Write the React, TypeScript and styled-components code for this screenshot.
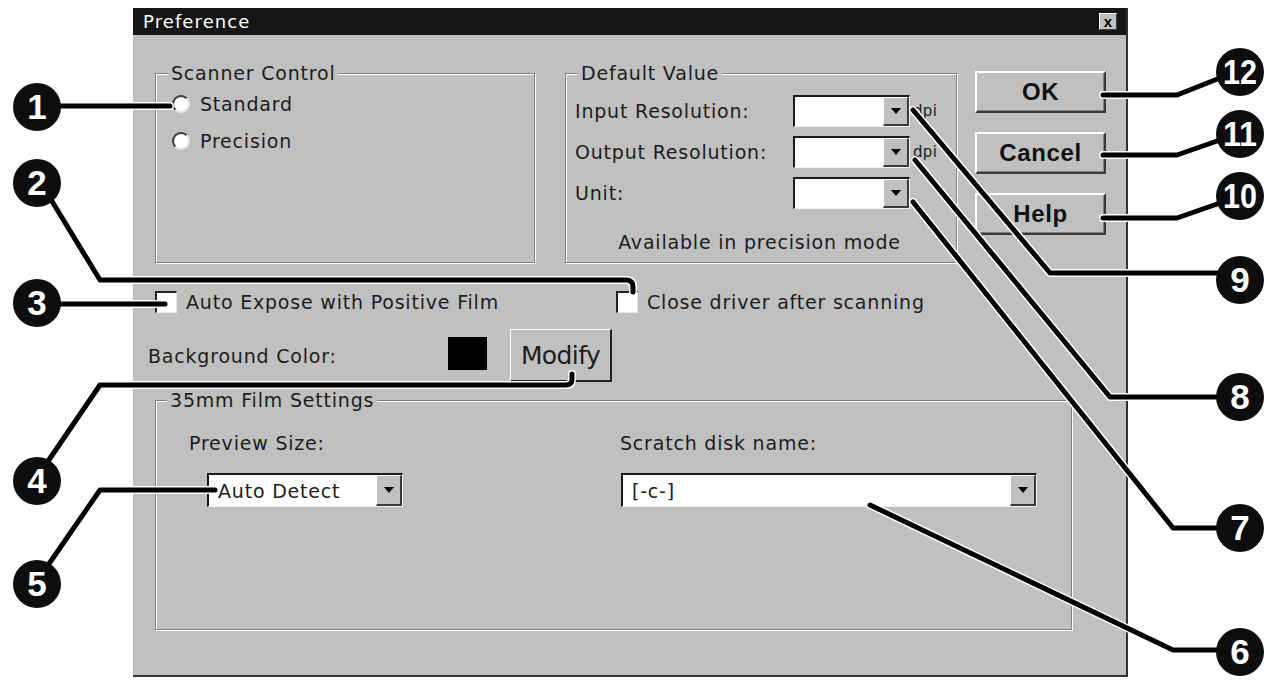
import styled, { createGlobalStyle } from 'styled-components';

const UI_FONT = `"DejaVu Sans", "Liberation Sans", sans-serif`;
const BOLD_FONT = `"Liberation Sans", Arial, sans-serif`;

const GlobalStyle = createGlobalStyle`
  html, body {
    margin: 0;
    padding: 0;
    background: #fff;
  }
  body {
    font-family: ${UI_FONT};
  }
`;

const Page = styled.div`
  position: relative;
  width: 1276px;
  height: 687px;
  box-sizing: border-box;
  padding: 8px 0 0 133px;
  overflow: hidden;
  background: #fff;
`;

const Dialog = styled.div`
  width: 995px;
  height: 669px;
  box-sizing: border-box;
  display: flex;
  flex-direction: column;
  background: #c0c0c0;
  border-right: 2px solid #333;
  border-bottom: 2px solid #333;
  font-family: ${UI_FONT};
  font-size: 19px;
  letter-spacing: 0.8px;
  color: #1c1c1c;
`;

const TitleBar = styled.div`
  flex: none;
  height: 27px;
  display: flex;
  align-items: center;
  justify-content: space-between;
  padding: 0 9px 0 10px;
  background: #161616;
  color: #fff;
`;

const Title = styled.span`
  font-size: 18px;
  letter-spacing: 1.1px;
`;

const CloseBox = styled.span`
  width: 18px;
  height: 17px;
  box-sizing: border-box;
  display: flex;
  align-items: center;
  justify-content: center;
  background: #c0c0c0;
  border-top: 1px solid #fff;
  border-left: 1px solid #fff;
  border-right: 1px solid #404040;
  border-bottom: 1px solid #404040;
  color: #000;
  font-family: ${BOLD_FONT};
  font-weight: bold;
  font-size: 15px;
  letter-spacing: 0;
  line-height: 1;
`;

const Body = styled.div`
  flex: 1;
  display: flex;
  flex-direction: column;
  padding: 27px 0 0 22px;
`;

const TopRow = styled.div`
  display: flex;
  align-items: flex-start;
`;

const Group = styled.fieldset<{ $w: number; $h: number; $pad: string; $ml?: number }>`
  margin: 0 0 0 ${p => p.$ml ?? 0}px;
  padding: ${p => p.$pad};
  width: ${p => p.$w}px;
  height: ${p => p.$h}px;
  min-width: 0;
  box-sizing: border-box;
  border: 1px solid #808080;
  box-shadow: 1px 1px 0 #fff, inset 1px 1px 0 #fff;
`;

// legend offset is measured from the group's content edge
const Legend = styled.legend<{ $x: number }>`
  margin-left: ${p => p.$x}px;
  padding: 0 3px;
  line-height: 22px;
  background: #c0c0c0;
`;

const OptionList = styled.div`
  display: flex;
  flex-direction: column;
  gap: 13px;
`;

const Option = styled.label`
  height: 24px;
  display: flex;
  align-items: center;
  gap: 10px;
`;

const Radio = styled.span`
  width: 18px;
  height: 18px;
  box-sizing: border-box;
  border-radius: 50%;
  background: #fff;
  border: 2px solid;
  border-color: #3a3a3a #e8e8e8 #e8e8e8 #3a3a3a;
`;

const FieldList = styled.div`
  display: flex;
  flex-direction: column;
  gap: 9px;
`;

const FieldRow = styled.div`
  height: 32px;
  display: flex;
  align-items: center;
`;

const FieldLabel = styled.span<{ $w: number }>`
  width: ${p => p.$w}px;
  flex: none;
  white-space: nowrap;
`;

const Unit = styled.span`
  margin-left: 3px;
  font-size: 15px;
  letter-spacing: 0.3px;
  color: #1c1c1c;
`;

const Hint = styled.div`
  margin-top: 22px;
  padding-right: 12px;
  line-height: 22px;
  text-align: center;
`;

const Combo = styled.div<{ $w: number; $h: number; $ml?: number }>`
  width: ${p => p.$w}px;
  height: ${p => p.$h}px;
  margin-left: ${p => p.$ml ?? 0}px;
  box-sizing: border-box;
  display: flex;
  align-items: center;
  justify-content: space-between;
  padding-left: 9px;
  background: #fff;
  border-top: 2px solid #1a1a1a;
  border-left: 2px solid #1a1a1a;
  border-right: 1px solid #f2f2f2;
  border-bottom: 1px solid #f2f2f2;
  white-space: nowrap;
`;

const DropButton = styled.span`
  align-self: stretch;
  width: 26px;
  flex: none;
  box-sizing: border-box;
  display: flex;
  align-items: center;
  justify-content: center;
  background: #c0c0c0;
  border-top: 1px solid #fff;
  border-left: 1px solid #fff;
  border-right: 2px solid #3a3a3a;
  border-bottom: 2px solid #3a3a3a;

  &::after {
    content: '';
    border-left: 5px solid transparent;
    border-right: 5px solid transparent;
    border-top: 6px solid #000;
  }
`;

const ButtonColumn = styled.div`
  margin: 9px 0 0 18px;
  display: flex;
  flex-direction: column;
  gap: 19px;
`;

const PushButton = styled.button`
  width: 131px;
  height: 42px;
  padding: 0;
  box-sizing: border-box;
  background: #c0c0c0;
  border-style: solid;
  border-width: 2px;
  border-color: #fff #3a3a3a #3a3a3a #fff;
  box-shadow: inset -1px -1px 0 #808080;
  font-family: ${BOLD_FONT};
  font-weight: bold;
  font-size: 24px;
  letter-spacing: 0.6px;
  color: #111;
`;

const CheckRow = styled.div`
  margin-top: 27px;
  height: 24px;
  display: flex;
  align-items: center;
`;

const CheckItem = styled.label<{ $w?: number }>`
  ${p => (p.$w ? `width: ${p.$w}px;` : '')}
  flex: none;
  display: flex;
  align-items: center;
  gap: 9px;
  white-space: nowrap;
`;

const CheckBox = styled.span`
  width: 22px;
  height: 22px;
  box-sizing: border-box;
  background: #fff;
  border-style: solid;
  border-width: 2px 1px 1px 2px;
  border-color: #222 #e8e8e8 #e8e8e8 #222;
`;

const ColorRow = styled.div`
  margin: 15px 0 0 -7px;
  height: 53px;
  display: flex;
  align-items: center;
`;

const Swatch = styled.span<{ $color: string }>`
  width: 39px;
  height: 33px;
  margin: -5px 23px 0 0;
  background: ${p => p.$color};
`;

const ModifyButton = styled.button`
  width: 102px;
  height: 53px;
  padding: 0;
  box-sizing: border-box;
  background: #c0c0c0;
  border-style: solid;
  border-width: 1px 2px 2px 1px;
  border-color: #fff #202020 #202020 #fff;
  font-family: ${UI_FONT};
  font-size: 25px;
  letter-spacing: -0.6px;
  color: #1c1c1c;
`;

const FilmRow = styled.div`
  margin-top: 7px;
`;

const FilmColumns = styled.div`
  display: flex;
`;

const FilmColumn = styled.div<{ $w?: number }>`
  ${p => (p.$w ? `width: ${p.$w}px;` : '')}
  flex: none;
  display: flex;
  flex-direction: column;
  gap: 19px;
`;

const ColumnLabel = styled.span`
  line-height: 22px;
`;

const Overlay = styled.svg`
  position: absolute;
  left: 0;
  top: 0;
  pointer-events: none;
`;

const LEADERS = [
  'M60 106 H170',
  'M50 198 L100 280 H626 Q633 280 633 287 V292',
  'M60 304 H165',
  'M42 470 L100 385 H566 Q572 385 572 379 V374',
  'M44 571 L100 490 H215',
  'M870 505 L1173 650 H1220',
  'M913 202 L1173 528 H1220',
  'M915 160 L1110 397 H1220',
  'M913 110 L1050 273 H1220',
  'M1103 218 H1177 L1220 203',
  'M1103 155 H1177 L1220 140',
  'M1103 95 H1177 L1220 78',
];

const BADGES = [
  { n: '1', x: 37, y: 107 },
  { n: '2', x: 37, y: 183 },
  { n: '3', x: 37, y: 303 },
  { n: '4', x: 37, y: 481 },
  { n: '5', x: 37, y: 584 },
  { n: '6', x: 1240, y: 652 },
  { n: '7', x: 1240, y: 528 },
  { n: '8', x: 1240, y: 397 },
  { n: '9', x: 1240, y: 280 },
  { n: '10', x: 1240, y: 196 },
  { n: '11', x: 1240, y: 134 },
  { n: '12', x: 1240, y: 72 },
];

function Callouts() {
  return (
    <Overlay width={1276} height={687} viewBox="0 0 1276 687">
      <g fill="none" strokeLinejoin="round" strokeLinecap="round">
        {LEADERS.map(d => (
          <path key={'h' + d} d={d} stroke="#fff" strokeWidth={8} />
        ))}
        {LEADERS.map(d => (
          <path key={d} d={d} stroke="#000" strokeWidth={5} />
        ))}
      </g>
      {BADGES.map(b => (
        <g key={b.n}>
          <circle cx={b.x} cy={b.y} r={24} fill="#0d0d0d" />
          <text
            x={b.x}
            y={b.y + 12}
            textAnchor="middle"
            fill="#fff"
            fontFamily={BOLD_FONT}
            fontWeight="bold"
            fontSize={35}
            {...(b.n.length > 1 ? { textLength: 34, lengthAdjust: 'spacingAndGlyphs' } : {})}
          >
            {b.n}
          </text>
        </g>
      ))}
    </Overlay>
  );
}

function Select({ w, h, ml, value }: { w: number; h: number; ml?: number; value?: string }) {
  return (
    <Combo $w={w} $h={h} $ml={ml}>
      <span>{value}</span>
      <DropButton />
    </Combo>
  );
}

export default function App() {
  return (
    <Page>
      <GlobalStyle />
      <Dialog>
        <TitleBar>
          <Title>Preference</Title>
          <CloseBox>x</CloseBox>
        </TitleBar>
        <Body>
          <TopRow>
            <Group $w={380} $h={201} $pad="8px 0 0 16px">
              <Legend $x={-4}>Scanner Control</Legend>
              <OptionList>
                <Option>
                  <Radio />
                  Standard
                </Option>
                <Option>
                  <Radio />
                  Precision
                </Option>
              </OptionList>
            </Group>
            <Group $w={392} $h={201} $pad="11px 0 0 9px" $ml={30}>
              <Legend $x={3}>Default Value</Legend>
              <FieldList>
                <FieldRow>
                  <FieldLabel $w={218}>Input Resolution:</FieldLabel>
                  <Select w={117} h={32} />
                  <Unit>dpi</Unit>
                </FieldRow>
                <FieldRow>
                  <FieldLabel $w={218}>Output Resolution:</FieldLabel>
                  <Select w={117} h={32} />
                  <Unit>dpi</Unit>
                </FieldRow>
                <FieldRow>
                  <FieldLabel $w={218}>Unit:</FieldLabel>
                  <Select w={117} h={32} />
                </FieldRow>
              </FieldList>
              <Hint>Available in precision mode</Hint>
            </Group>
            <ButtonColumn>
              <PushButton>OK</PushButton>
              <PushButton>Cancel</PushButton>
              <PushButton>Help</PushButton>
            </ButtonColumn>
          </TopRow>

          <CheckRow>
            <CheckItem $w={461}>
              <CheckBox />
              Auto Expose with Positive Film
            </CheckItem>
            <CheckItem>
              <CheckBox />
              Close driver after scanning
            </CheckItem>
          </CheckRow>

          <ColorRow>
            <FieldLabel $w={300}>Background Color:</FieldLabel>
            <Swatch $color="#000" />
            <ModifyButton>Modify</ModifyButton>
          </ColorRow>

          <FilmRow>
            <Group $w={917} $h={241} $pad="21px 0 0 33px">
              <Legend $x={-22}>35mm Film Settings</Legend>
              <FilmColumns>
                <FilmColumn $w={431}>
                  <ColumnLabel>Preview Size:</ColumnLabel>
                  <Select w={196} h={34} ml={18} value="Auto Detect" />
                </FilmColumn>
                <FilmColumn>
                  <ColumnLabel>Scratch disk name:</ColumnLabel>
                  <Select w={416} h={34} ml={1} value="[-c-]" />
                </FilmColumn>
              </FilmColumns>
            </Group>
          </FilmRow>
        </Body>
      </Dialog>
      <Callouts />
    </Page>
  );
}
